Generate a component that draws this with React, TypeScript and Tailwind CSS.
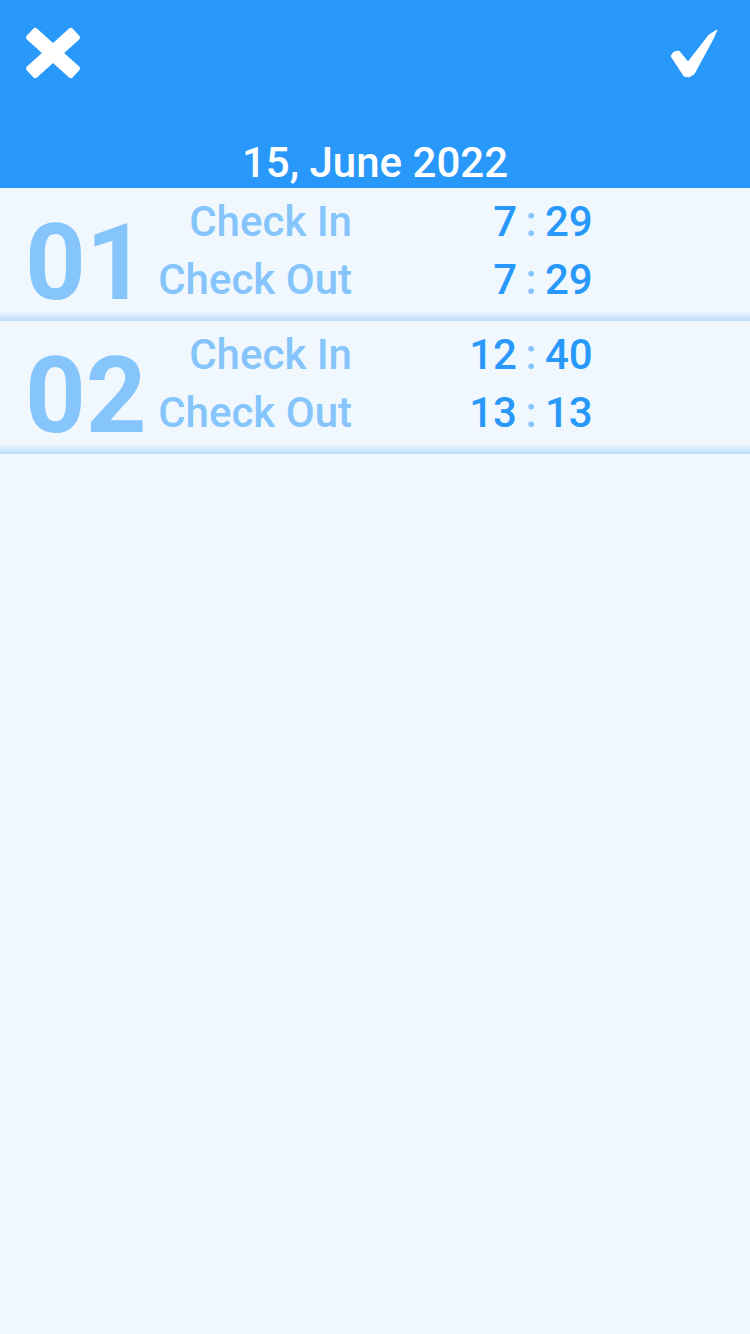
import React from 'react';

type Entry = {
  no: string;
  checkIn: [string, string];
  checkOut: [string, string];
};

const entries: Entry[] = [
  { no: '01', checkIn: ['7', '29'], checkOut: ['7', '29'] },
  { no: '02', checkIn: ['12', '40'], checkOut: ['13', '13'] },
];

function CloseIcon() {
  return (
    <svg width="56" height="52" viewBox="0 0 56 52">
      <g transform="translate(28 26)">
        <rect x="-31" y="-7.5" width="62" height="15" rx="3" fill="#fff" transform="rotate(42)" />
        <rect x="-31" y="-7.5" width="62" height="15" rx="3" fill="#fff" transform="rotate(-42)" />
      </g>
    </svg>
  );
}

function CheckIcon() {
  return (
    <svg width="50" height="50" viewBox="0 0 50 50">
      <path
        d="M1 28 L4 24 L9 23 L18 34 L39 7 L47 2 L43 11 L24 46 L19 49 L14 48 Z"
        fill="#fff"
        stroke="#fff"
        strokeWidth="1"
        strokeLinejoin="round"
      />
    </svg>
  );
}

function TimeLine({ label, time }: { label: string; time: [string, string] }) {
  return (
    <div className="flex h-[58px] items-center text-[42px] leading-[58px] font-medium">
      <div className="w-[196px] text-right text-[#85C5FB]">{label}</div>
      <div className="w-[165px] text-right text-[#2899FA]">{time[0]}</div>
      <div className="w-[28px] text-center text-[#85C5FB]">:</div>
      <div className="text-[#2899FA]">{time[1]}</div>
    </div>
  );
}

function EntryRow({ entry }: { entry: Entry }) {
  return (
    <div>
      <div className="flex pl-[25px] pt-[5px] pb-[2px]">
        <div className="h-[116px] w-[131px] pt-[17px] text-[106px] leading-none font-bold text-[#85C5FB]">
          {entry.no}
        </div>
        <div className="flex flex-col">
          <TimeLine label="Check In" time={entry.checkIn} />
          <TimeLine label="Check Out" time={entry.checkOut} />
        </div>
      </div>
      <div className="h-[10px] bg-linear-to-b from-[#F0F8FE] to-[#BCDDF9]" />
    </div>
  );
}

export default function App() {
  return (
    <div className="min-h-screen bg-[#F0F8FE] font-['Roboto',sans-serif]">
      <header className="flex h-[188px] flex-col bg-[#2899FA]">
        <div className="flex items-start justify-between pl-[25px] pr-[30px] pt-[27px]">
          <CloseIcon />
          <div className="pt-[1px]">
            <CheckIcon />
          </div>
        </div>
        <div className="mt-auto pb-[4px] text-center text-[42px] leading-[42px] font-medium text-white">
          15, June 2022
        </div>
      </header>
      {entries.map((e) => (
        <EntryRow key={e.no} entry={e} />
      ))}
    </div>
  );
}
